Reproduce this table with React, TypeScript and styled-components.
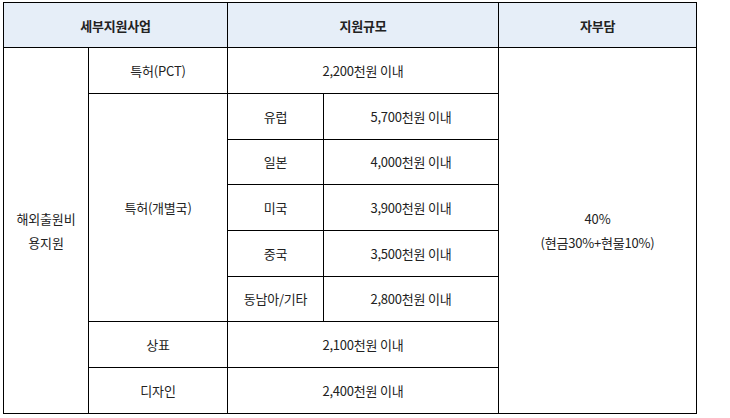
import React from 'react'
import styled, { createGlobalStyle } from 'styled-components'

const GlobalStyle = createGlobalStyle`
  html, body {
    margin: 0;
    padding: 0;
    background: #fff;
  }
  body {
    font-family: 'Noto Sans CJK KR', 'Noto Sans', sans-serif;
    color: #222;
  }
`

const Wrap = styled.div`
  padding: 2px 0 0 3px;
`

const Table = styled.table`
  width: 693px;
  border-collapse: collapse;
  table-layout: fixed;
  font-size: 13px;
  letter-spacing: -0.2px;
`

const Row = styled.tr<{ $h: number }>`
  height: ${(p) => p.$h}px;
`

const Head = styled.th`
  background: #e6eef8;
  border: 1px solid #000;
  font-weight: 700;
  color: #222;
  text-align: center;
  vertical-align: middle;
  padding: 0;
`

const Cell = styled.td<{ $top?: boolean }>`
  border: 1px solid #000;
  text-align: center;
  vertical-align: middle;
  padding: 0;
  line-height: 24px;
  color: #222;
`

const cols = [85, 139, 96, 175, 198]

const countries: [string, string][] = [
  ['유럽', '5,700천원 이내'],
  ['일본', '4,000천원 이내'],
  ['미국', '3,900천원 이내'],
  ['중국', '3,500천원 이내'],
  ['동남아/기타', '2,800천원 이내'],
]

const rowHeights = [46, 46, 45, 46, 46, 45, 46, 46]

const App: React.FC = () => {
  return (
    <>
      <GlobalStyle />
      <Wrap>
        <Table>
          <colgroup>
            {cols.map((w, i) => (
              <col key={i} style={{ width: w }} />
            ))}
          </colgroup>
          <thead>
            <Row $h={45}>
              <Head colSpan={2}>세부지원사업</Head>
              <Head colSpan={2}>지원규모</Head>
              <Head>자부담</Head>
            </Row>
          </thead>
          <tbody>
            <Row $h={rowHeights[0]}>
              <Cell rowSpan={8}>
                해외출원비
                <br />
                용지원
              </Cell>
              <Cell>특허(PCT)</Cell>
              <Cell colSpan={2}>2,200천원 이내</Cell>
              <Cell rowSpan={8}>
                40%
                <br />
                (현금30%+현물10%)
              </Cell>
            </Row>
            {countries.map(([name, amount], i) => (
              <Row key={name} $h={rowHeights[i + 1]}>
                {i === 0 && <Cell rowSpan={5}>특허(개별국)</Cell>}
                <Cell>{name}</Cell>
                <Cell>{amount}</Cell>
              </Row>
            ))}
            <Row $h={rowHeights[6]}>
              <Cell>상표</Cell>
              <Cell colSpan={2}>2,100천원 이내</Cell>
            </Row>
            <Row $h={rowHeights[7]}>
              <Cell>디자인</Cell>
              <Cell colSpan={2}>2,400천원 이내</Cell>
            </Row>
          </tbody>
        </Table>
      </Wrap>
    </>
  )
}

export default App
